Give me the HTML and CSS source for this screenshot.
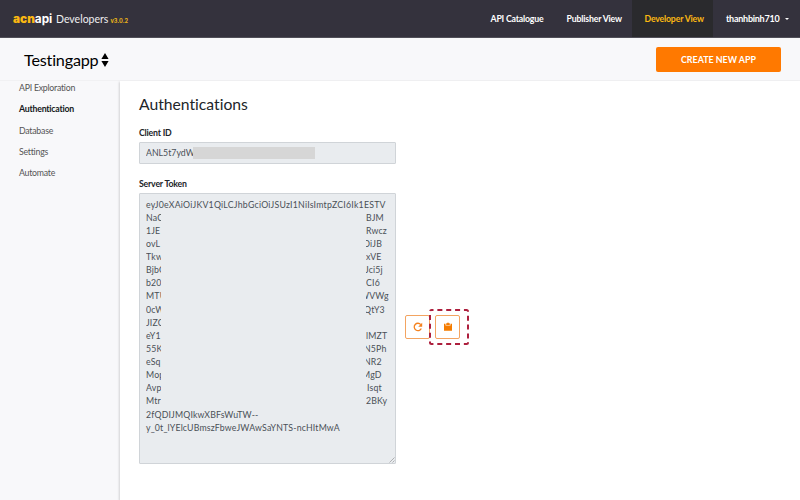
FILE: index.html
```html
<!DOCTYPE html>
<html lang="en">
<head>
<meta charset="utf-8">
<title>acnapi Developers</title>
<link rel="stylesheet" href="styles.css">
</head>
<body>
<header class="navbar">
  <div class="brand"><span class="brand-name"><b>acn</b>api</span><span class="brand-sub">Developers</span><span class="version">v3.0.2</span></div>
  <nav class="nav">
    <a class="nav-catalogue">API Catalogue</a>
    <a class="nav-publisher">Publisher View</a>
    <a class="nav-developer active">Developer View</a>
    <a class="nav-user">thanhbinh710<i class="caret"></i></a>
  </nav>
</header>
<div class="appbar">
  <div class="app-select"><span>Testingapp</span><svg width="8" height="14" viewBox="0 0 8 14"><path d="M4 0L7.6 6H.4zM4 14L.4 8h7.2z"/></svg></div>
  <button class="create">CREATE NEW APP</button>
</div>
<div class="body">
  <aside class="sidebar">
    <a>API Exploration</a>
    <a class="current">Authentication</a>
    <a>Database</a>
    <a>Settings</a>
    <a>Automate</a>
  </aside>
  <main class="panel">
    <h1>Authentications</h1>
    <div class="label">Client ID</div>
    <div class="field"><span class="client">ANL5t7ydW</span><span class="mask"></span></div>
    <div class="label token-label">Server Token</div>
    <div class="token-row">
      <div class="token">
        <div class="first">eyJ0eXAiOiJKV1QiLCJhbGciOiJSUzI1NiIsImtpZCI6Ik1ESTV</div>
        <div class="line"><span>NaC</span><span>BJM</span></div>
        <div class="line"><span>1JE</span><span>Rwcz</span></div>
        <div class="line"><span>ovL</span><span class="cut3">OiJB</span></div>
        <div class="line"><span>Tkw</span><span>xVE</span></div>
        <div class="line"><span>BjbG</span><span class="cut1">Jci5j</span></div>
        <div class="line"><span>b20</span><span>CI6</span></div>
        <div class="line"><span>MTU</span><span class="cut6">WVWg</span></div>
        <div class="line"><span>0cW</span><span class="cut2">QtY3</span></div>
        <div class="line"><span>JIZC</span><span></span></div>
        <div class="line"><span>eY1</span><span>lMZT</span></div>
        <div class="line"><span>55K</span><span class="cut2">N5Ph</span></div>
        <div class="line"><span>eSq</span><span class="cut2">NR2</span></div>
        <div class="line"><span>Mop</span><span class="cut4">MgD</span></div>
        <div class="line"><span>Avp</span><span class="in1">Isqt</span></div>
        <div class="line"><span>Mtr</span><span>2BKy</span></div>
        <div class="wide">2fQDIJMQIkwXBFsWuTW--</div>
        <div class="last">y_0t_lYElcUBmszFbweJWAwSaYNTS-ncHItMwA</div>
        <svg class="grip" width="6" height="6" viewBox="0 0 6 6"><path d="M.5 5.5l5-5M3.5 5.5l2-2" stroke="#888" stroke-width=".6"/></svg>
      </div>
      <button class="tool"><svg width="10" height="10" viewBox="0 0 10 10"><path d="M8.3 6.5A3.7 3.7 0 1 1 7.8 2.6" fill="none" stroke="#f5821f" stroke-width="1.3"/><path d="M9.2.7v4H5.2z" fill="#f5821f"/></svg></button>
      <div class="highlight">
        <svg class="dashes" width="40" height="36" viewBox="0 0 40 36"><rect x="1" y="1" width="38" height="34" rx="1.5" fill="none" stroke="#ad1f3d" stroke-width="2" stroke-dasharray="5 3.86" stroke-dashoffset="3"/></svg>
        <button class="tool"><svg width="10" height="10" viewBox="0 0 10 10"><path d="M1 1.7h1.5v1.8h5V1.7H9v7.1H1z" fill="#f57c00"/><path d="M3.2 1.2h1a.8.8 0 0 1 1.6 0h1v1.7H3.2z" fill="#f57c00"/></svg></button>
      </div>
    </div>
  </main>
</div>
</body>
</html>
```
FILE: styles.css
```css
* { box-sizing: border-box; }
body { margin: 0; width: 800px; height: 500px; overflow: hidden; background: #f8f8fa; color: #212529; font-family: Lato, sans-serif; font-size: 8.75px; line-height: 13.125px; font-variant-ligatures: none; }
.navbar { height: 38px; background: #34323d; border-bottom: 1px solid #504f58; display: flex; justify-content: space-between; color: #fff; }
.brand { display: flex; align-items: baseline; padding: 12px 0 0 13px; white-space: nowrap; }
.brand-name { font: 700 11.8px/14px Inter, sans-serif; width: 43px; }
.brand-name b { color: #fbb812; }
.brand-sub { font-size: 10.5px; width: 54.5px; color: #eeeef0; }
.version { font: 700 5.6px/8px Inter, sans-serif; color: #e8b21a; }
.nav { display: flex; font-weight: 700; font-size: 8.75px; letter-spacing: -.19px; }
.nav a { line-height: 38px; height: 37px; padding-left: 12.5px; white-space: nowrap; }
.nav-catalogue { width: 76px; }
.nav-publisher { width: 78px; }
.nav-developer { width: 81px; }
.nav .nav-user { width: 87px; padding-left: 13px; letter-spacing: -.4px; font-size: 9px; }
.active { background: #2a2a2d; color: #fbb812; }
.caret { display: inline-block; margin-left: 6px; border: 2.5px solid transparent; border-top-color: #fff; border-bottom: 0; vertical-align: 2px; }
.nav .nav-user { letter-spacing: -.25px; }
.appbar { height: 43px; display: flex; justify-content: space-between; align-items: center; padding: 0 19px 0 24px; border-bottom: 1px solid #f1f1f3; }
.app-select { display: flex; align-items: center; gap: 3px; font-size: 16.2px; letter-spacing: -.2px; color: #000; line-height: 22px; padding-top: 1px; }
.create { width: 125px; height: 25px; border: 0; border-radius: 2px; background: #ff7900; color: #fff; font: 700 8.9px Lato, sans-serif; padding: 0; }
.body { display: flex; height: 419px; }
.sidebar { width: 120px; padding-left: 19px; color: #555; }
.sidebar a { display: block; height: 21.25px; line-height: 13.2px; letter-spacing: -.24px; }
.sidebar .current { font-weight: 700; color: #16181b; letter-spacing: -.22px; }
.panel { flex: 1; background: #fff; padding: 13px 0 0 19px; box-shadow: -1px 1px 2px rgba(0,0,0,.15); }
h1 { margin: 0; font-size: 15.7px; font-weight: 400; line-height: 20px; }
.label { margin-top: 12px; font-weight: 700; height: 16px; line-height: 13px; letter-spacing: -.2px; }
.field { width: 257px; height: 22px; display: flex; align-items: center; padding-left: 6px; background: #e9ecef; border: 1px solid #d0d4d8; border-radius: 1px; color: #495057; }
.client { width: 47px; overflow: hidden; }
.mask { width: 122px; height: 12px; background: #d6d6d6; }
.token-label { margin-top: 13px; }
.token-row { display: flex; align-items: center; }
.token { position: relative; width: 257px; height: 271px; padding: 3.5px 0 0 6px; background: #e9ecef; border: 1px solid #d0d4d8; border-radius: 1px; color: #495057; margin-right: 9px; white-space: nowrap; letter-spacing: .17px; }
.first { letter-spacing: .23px; }
.line { display: grid; grid-template-columns: 15px 26px; column-gap: 205px; height: 13.125px; }
.line span { overflow: hidden; }
.cut1 { text-indent: -1px; }
.cut2 { text-indent: -2px; }
.cut3 { text-indent: -3px; }
.cut4 { text-indent: -4px; }
.cut6 { text-indent: -6px; }
.in1 { text-indent: 1px; }
.grip { position: absolute; right: 0; bottom: 0; }
.tool { width: 25px; height: 24px; padding: 0; display: flex; align-items: center; justify-content: center; border: 1px solid #f3a461; border-radius: 2px; background: #fff; }
.token-row > .tool, .highlight { margin-bottom: 3px; }
.highlight { position: relative; padding-left: 5px; }
.dashes { position: absolute; left: -1px; top: -6px; }
```
